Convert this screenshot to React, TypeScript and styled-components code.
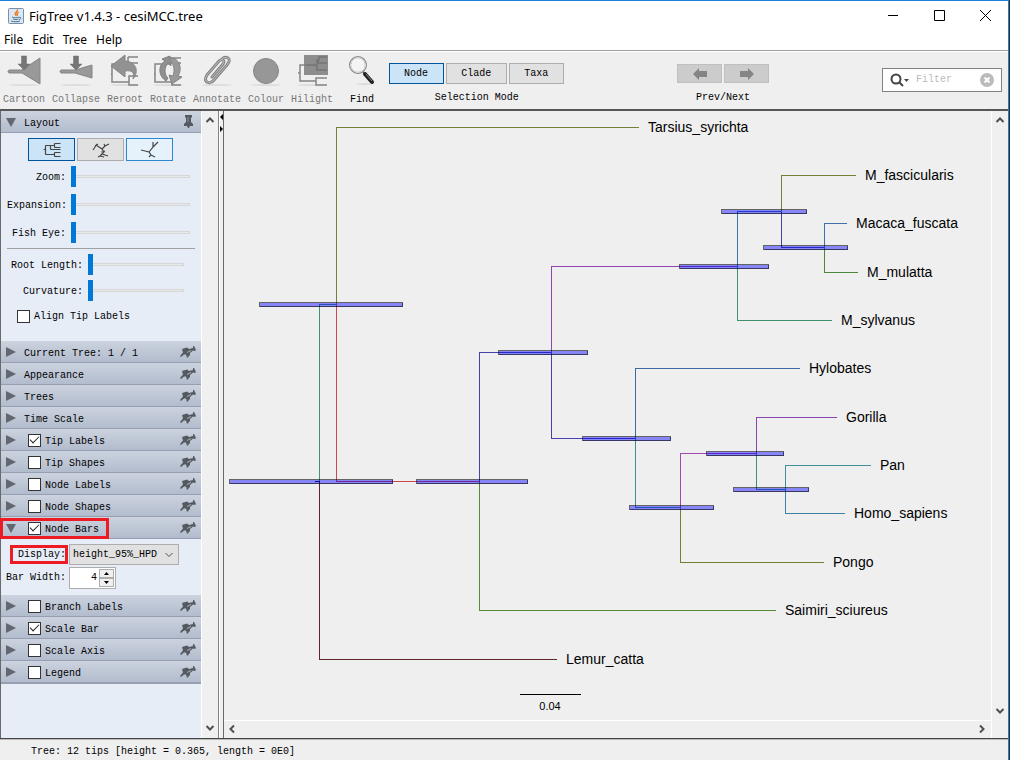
import React, { useState } from "react";
import styled, { createGlobalStyle, css } from "styled-components";

const mono = '"Liberation Mono", "DejaVu Sans Mono", monospace';
const ui = '"Noto Sans", "Open Sans", sans-serif';

const GlobalStyle = createGlobalStyle`
  * { box-sizing: border-box; }
  body { margin: 0; background: #efefef; color: #000; font: 10px/12px ${mono}; }
  button, input, select { font: inherit; color: inherit; margin: 0; padding: 0; }
  svg { display: block; flex: none; }
`;

const Desktop = styled.div`
  display: flex;
  min-height: 100vh;
  padding-right: 1px;
  background: #3a2c2c;
`;

const Window = styled.div`
  flex: 1;
  min-width: 0;
  display: flex;
  flex-direction: column;
  background: #efefef;
  border-top: 1px solid #1a80d8;
  border-right: 1px solid #1a80d8;
`;

const TitleBar = styled.header`
  display: flex;
  align-items: center;
  height: 29px;
  padding-left: 8px;
  gap: 5px;
  background: #fff;
  font-family: ${ui};
`;

const Title = styled.h1`
  flex: 1;
  margin: 0;
  font-size: 13px;
  line-height: 16px;
  font-weight: 400;
`;

const WindowButtons = styled.div`
  display: flex;
`;

const WindowButton = styled.button`
  display: grid;
  place-items: center;
  width: 46px;
  height: 28px;
  border: 0;
  background: none;
`;

const MenuBar = styled.nav`
  display: flex;
  align-items: center;
  gap: 9px;
  height: 21px;
  padding-left: 4px;
  background: #fff;
  border-bottom: 1px solid #a0a0a0;
`;

const MenuItem = styled.button`
  border: 0;
  background: none;
  font-family: ${ui};
  font-size: 12px;
  line-height: 16px;
`;

const ToolBar = styled.div`
  display: flex;
  height: 60px;
  padding: 2px 6px 0 3px;
  border-top: 1px solid #fff;
  border-bottom: 2px solid #555;
`;

const Tools = styled.div`
  display: flex;
  gap: 7px;
`;

const Tool = styled.button<{ $spaced?: boolean }>`
  display: flex;
  flex-direction: column;
  align-items: center;
  gap: 6px;
  height: 54px;
  margin-left: ${(p) => (p.$spaced ? 5 : 0)}px;
  border: 0;
  background: none;
  color: #000;
  &:disabled { color: #777; }
`;

const ToolGroup = styled.div<{ $start?: boolean }>`
  display: flex;
  flex-direction: column;
  align-items: center;
  gap: ${(p) => (p.$start ? 8 : 9)}px;
  padding-top: ${(p) => (p.$start ? 9 : 10)}px;
  margin-left: ${(p) => (p.$start ? "10px" : "auto")};
`;

const ButtonRow = styled.div`
  display: flex;
  gap: 2px;
`;

const ModeButton = styled.button<{ $on: boolean }>`
  height: 21px;
  padding: 0 15px 0 14px;
  border: 1px solid ${(p) => (p.$on ? "#005499" : "#adadad")};
  background: ${(p) => (p.$on ? "#cce4f7" : "#e1e1e1")};
`;

const StepButton = styled.button`
  display: grid;
  place-items: center;
  width: 45px;
  height: 19px;
  border: 1px solid #bfbfbf;
  background: #ccc;
`;

const FilterBox = styled.label`
  display: flex;
  align-items: center;
  width: 120px;
  height: 24px;
  margin: 14px 0 0 auto;
  padding: 0 7px;
  gap: 6px;
  background: #fff;
  border: 1px solid #828282;
`;

const FilterInput = styled.input`
  flex: 1;
  min-width: 0;
  border: 0;
  outline: 0;
  background: none;
  &::placeholder { color: #bbb; opacity: 1; }
`;

const ClearButton = styled.button`
  border: 0;
  background: none;
`;

const Body = styled.div`
  flex: 1;
  display: flex;
`;

const SideBar = styled.aside`
  display: flex;
  border-left: 1px solid #696969;
  border-right: 1px solid #848484;
`;

const Panels = styled.div`
  width: 200px;
  background: #e6edf7;
`;

const ScrollBar = styled.div<{ $corner?: boolean }>`
  display: flex;
  flex-direction: column;
  justify-content: space-between;
  align-items: center;
  width: 17px;
  padding: 5px 0 ${(p) => (p.$corner ? 22 : 5)}px;
  border-left: 1px solid #fff;
  background: #f0f0f0;
`;

const HScrollBar = styled.div`
  display: flex;
  justify-content: space-between;
  align-items: center;
  height: 18px;
  padding: 0 4px 1px;
  border-top: 1px solid #fff;
`;

const ScrollButton = styled.button`
  border: 0;
  background: none;
`;

const Splitter = styled.div`
  display: flex;
  flex-direction: column;
  align-items: flex-end;
  gap: 6px;
  width: 4px;
  padding-top: 3px;
  border-left: 1px solid #fff;
`;

const redFrame = css`
  content: "";
  box-sizing: border-box;
  position: absolute;
  border: 3px solid #ed1c24;
  pointer-events: none;
`;

const Header = styled.div<{ $last?: boolean; $framed?: boolean }>`
  position: relative;
  display: flex;
  align-items: center;
  height: ${(p) => (p.$last ? 23 : 22)}px;
  padding: 4px 5px 0 5px;
  border-bottom: ${(p) => (p.$last ? 2 : 1)}px solid #979fb3;
  background: linear-gradient(#ccd3df, #b2bccd);
  ${(p) => p.$framed && css`&::after { ${redFrame} inset: 1px auto -1px -1px; width: 109px; }`}
`;

const Disclosure = styled.button`
  width: 18px;
  height: 12px;
  margin-top: -4px;
  border: 0;
  background: none;
`;

const HeaderLabel = styled.span`
  flex: 1;
`;

const CheckLabel = styled.label<{ $header?: boolean }>`
  display: flex;
  align-items: center;
  gap: 4px;
  ${(p) => p.$header && css`flex: 1; padding-left: 4px;`}
`;

const CheckBox = styled.input.attrs({ type: "checkbox" })`
  appearance: none;
  width: 13px;
  height: 13px;
  margin-top: -2px;
  border: 1px solid #333;
  background: #fff;
  &:checked::after {
    content: "";
    display: block;
    width: 8px;
    height: 4px;
    margin: 1px;
    border: solid #222;
    border-width: 0 0 1px 1px;
    transform: rotate(-45deg);
  }
`;

const PinButton = styled.button<{ $upright?: boolean }>`
  margin: -4px ${(p) => (p.$upright ? 2 : 0)}px 0 0;
  border: 0;
  background: none;
`;

const LayoutBody = styled.div`
  height: 208px;
  padding: 5px 6px 0;
`;

const LayoutButtons = styled.div`
  display: flex;
  gap: 2px;
  padding: 0 0 3px 21px;
`;

const LayoutButton = styled.button<{ $bg: string; $line: string }>`
  display: grid;
  place-items: center;
  width: 47px;
  height: 23px;
  border: 1px solid ${(p) => p.$line};
  background: ${(p) => p.$bg};
`;

const SliderRow = styled.label<{ $wide?: boolean }>`
  display: flex;
  align-items: center;
  height: ${(p) => (p.$wide ? 26 : 28)}px;
  gap: 5px;
  padding-right: ${(p) => (p.$wide ? 11 : 5)}px;
  > span {
    width: ${(p) => (p.$wide ? 76 : 59)}px;
    text-align: right;
    white-space: nowrap;
  }
`;

const Slider = styled.input.attrs({ type: "range" })`
  appearance: none;
  flex: 1;
  min-width: 0;
  height: 21px;
  margin-top: -3px;
  background: none;
  &::-webkit-slider-runnable-track {
    height: 3px;
    border: 1px solid #d6d6d6;
    background: #e7eaea;
  }
  &::-webkit-slider-thumb {
    appearance: none;
    width: 5px;
    height: 21px;
    margin: -10px 0 0 -1px;
    background: #0078d7;
  }
`;

const Rule = styled.hr`
  height: 1px;
  margin: 0 0 4px;
  border: 0;
  background: #a0a0a0;
`;

const AlignRow = styled.div`
  padding: 6px 0 0 10px;
`;

const BarsBody = styled.div`
  height: 56px;
  padding: 4px 0 0 5px;
`;

const Field = styled.div`
  display: flex;
  align-items: center;
  gap: 3px;
  height: 23px;
`;

const FieldLabel = styled.label<{ $framed?: boolean }>`
  position: relative;
  width: 60px;
  text-align: right;
  ${(p) => p.$framed && css`&::after { ${redFrame} inset: -4px -2px -3px 4px; }`}
`;

const Combo = styled.div`
  display: flex;
  align-items: center;
  width: 110px;
  height: 21px;
  padding-right: 4px;
  border: 1px solid #adadad;
  background: #e1e1e1;
`;

const Select = styled.select`
  appearance: none;
  flex: 1;
  min-width: 0;
  height: 19px;
  padding-left: 3px;
  border: 0;
  background: none;
`;

const Spinner = styled.div`
  display: flex;
  width: 47px;
  height: 22px;
  padding: 1px;
  border: 1px solid #adadad;
  background: #fff;
`;

const SpinInput = styled.input`
  flex: 1;
  min-width: 0;
  padding-right: 2px;
  border: 0;
  text-align: right;
`;

const SpinButtons = styled.div`
  display: grid;
  grid-template-rows: 9px 9px;
  width: 15px;
`;

const SpinButton = styled.button`
  display: grid;
  place-items: center;
  border: 1px solid #adadad;
  background: #f0f0f0;
`;

const Main = styled.main`
  flex: 1;
  min-width: 0;
  display: flex;
  border-left: 1px solid #696969;
`;

const Canvas = styled.div`
  flex: 1;
  min-width: 0;
  display: flex;
  flex-direction: column;
`;

const TreeView = styled.div`
  flex: 1;
  overflow: hidden;
  text { font: 14px "Liberation Sans", Arial, sans-serif; }
`;

const StatusBar = styled.footer`
  height: 22px;
  padding: 7px 0 0 31px;
  border-top: 1px solid #444;
  box-shadow: inset 0 1px #bbb;
`;

/* ---------- icons ---------- */

const Shadow = () => <ellipse cx="17" cy="31" rx="15" ry="1" fill="#ddd" />;

const DownArrow = () => (
  <path d="M14.500 2h5v8h3.500l-6 6-6-6h3.500z" fill="#767676" stroke="#6c6c6c" strokeWidth=".5" />
);

const toolIcons: Record<string, React.ReactNode> = {
  Cartoon: (
    <>
      <Shadow />
      <path d="M2 16h13L33 4v26L15 19H2q-2-1.500 0-3z" fill="#999" stroke="#858585" />
      <DownArrow />
    </>
  ),
  Collapse: (
    <>
      <Shadow />
      <path d="M2 16h14l17-5v13l-17-5H2q-2-1.500 0-3z" fill="#999" stroke="#858585" />
      <DownArrow />
    </>
  ),
  Reroot: (
    <>
      <Shadow />
      <path d="M4 18v-8h14M20 3h10M20 3v8M20 9h10M4 18v10h17v-6h9M21 28v3h9M3 20h1" stroke="#858585" strokeWidth="1.500" fill="none" />
      <path d="M3 12L17 1v6c12 1 14 11 8 18 2-7-1-9-8-8v6z" fill="#929292" stroke="#858585" />
    </>
  ),
  Rotate: (
    <>
      <Shadow />
      <path d="M4 18v-8h14V4h12M4 18v10h17v-5h9M21 28v3h9M20 9h10M3 20h1" stroke="#858585" strokeWidth="1.500" fill="none" />
      <path d="M15 27C7 22 7 11 14 7l-3-2 8-3 1 10-3-3c-4 4-4 12 0 15z" fill="#909090" stroke="#7e7e7e" />
      <path d="M19 4c9-1 13 11 8 18l4 1-10 7-3-9 4 1c2-6 1-12-3-15z" fill="#999" stroke="#858585" />
    </>
  ),
  Annotate: (
    <>
      <Shadow />
      <path
        d="M12 23L23 10q2-3 0-4-2-1-4 1L7 21q-3 5 0 7 4 2 7-2L27 11q4-5 1-7-3-2-6 1"
        fill="none" stroke="#858585" strokeWidth="3" strokeLinecap="round"
      />
      <path
        d="M12 23L23 10q2-3 0-4-2-1-4 1L7 21q-3 5 0 7 4 2 7-2L27 11q4-5 1-7-3-2-6 1"
        fill="none" stroke="#bbb" strokeLinecap="round"
      />
    </>
  ),
  Colour: (
    <>
      <Shadow />
      <circle cx="17" cy="17" r="12.500" fill="#979797" stroke="#858585" />
    </>
  ),
  Hilight: (
    <>
      <Shadow />
      <rect x="9" y="1" width="24" height="20" fill="#8d8d8d" />
      <path d="M10 11h12V6h2V3h8M23 6v3h9M22 11v5h10" stroke="#747474" strokeWidth="1.500" fill="none" />
      <path d="M5 20v-9h5M5 20v7h16v-3h11M21 27v4h11M3 19h2" stroke="#858585" strokeWidth="1.500" fill="none" />
    </>
  ),
  Find: (
    <>
      <ellipse cx="20" cy="30" rx="9" ry="1" fill="#ddd" />
      <path d="M18 18l3 2" stroke="#777" strokeWidth="2" />
      <path d="M20 20l7 8" stroke="#222" strokeWidth="4" strokeLinecap="round" />
      <path d="M21 20l6 7" stroke="#888" />
      <circle cx="13" cy="11" r="8" fill="#f4f4f4" stroke="#888" strokeWidth="2" />
      <circle cx="13" cy="11" r="7.500" fill="none" stroke="#ddd" />
    </>
  ),
};

const ToolIcon = ({ name }: { name: string }) => (
  <svg width="34" height="34" viewBox="0 0 34 34">{toolIcons[name]}</svg>
);

const JavaIcon = () => (
  <svg width="16" height="16" viewBox="0 0 16 16">
    <rect x=".5" y=".5" width="15" height="15" rx="1" fill="#dce7f1" stroke="#7590ad" />
    <path d="M9 1.500c2 2-4 3-1 6M10.500 4c-2 1-2 2-1 4" stroke="#e8751a" fill="none" strokeWidth="1.300" />
    <path d="M4 9c2 1 5 1 7 0M5 11c2 .8 4 .8 5.500 0M3 13c3 1 7 1 9 0M11 9.500c3-.8 2 2 0 2" stroke="#4a7293" fill="none" />
  </svg>
);

const Triangle = ({ open }: { open?: boolean }) => (
  <svg width="12" height="12" viewBox="0 0 12 12">
    <path d={open ? "M0 2h10L5 11z" : "M0 1l10 5-10 5z"} fill="#636870" />
  </svg>
);

const Pin = ({ upright }: { upright?: boolean }) =>
  upright ? (
    <svg width="11" height="15" viewBox="0 0 11 15">
      <path d="M2 1h7v2L8 4v4l2 2v2H7l-1 2H5l-1-2H1v-2l2-2V4L2 3z" fill="#555a60" />
      <path d="M5 3v5" stroke="#8b9199" />
    </svg>
  ) : (
    <svg width="16" height="12" viewBox="0 0 16 12">
      <path d="M2 3l5-1.500L9 3l4-1V0h1l2 4-1 1-2-.5L10 7v2l-3 3-1-3.500H4L1 11 0 10l3-3.500z" fill="#555a60" />
      <path d="M7 6.500l4-2" stroke="#aeb5c2" />
    </svg>
  );

type Dir = "up" | "down" | "left" | "right";
const chevrons: Record<Dir, string> = {
  up: "M1.500 6L5 2.500 8.500 6",
  down: "M1.500 3L5 6.500 8.500 3",
  left: "M6 1.500L2.500 5 6 8.500",
  right: "M3 1.500L6.500 5 3 8.500",
};
const Chevron = ({ dir, thin }: { dir: Dir; thin?: boolean }) => (
  <svg width="10" height="10" viewBox="0 0 10 10">
    <path d={chevrons[dir]} fill="none" stroke="#505050" strokeWidth={thin ? 1 : 2} />
  </svg>
);

const LayoutIcon = ({ kind }: { kind: string }) => {
  const shapes: Record<string, string> = {
    rectangular: "M.5 8.500h2M2.500 4.500v9M2.500 4.500h9M7.500 8.500h10M7.500 4.500v4M11.500 2.500v4M11.500 2.500h6M11.500 6.500h6M2.500 13.500h9M11.500 11.500v4M11.500 11.500h6M11.500 15.500h6",
    polar: "M1 9l4-6M3 5l3-2M4 4l6 4M10 8l3-3 4-2M13 5l-1-2M10 8l2 3-4 4-2 1M9 11l4-1M10 13l6 2M8 15l4 1",
    radial: "M0 9l8 2M8 11l4-5V1M12 6l5-5M8 11l2 3-2 2M10 14l4 2",
  };
  return (
    <svg width="18" height="18" viewBox="0 0 18 18">
      <path d={shapes[kind]} fill="none" stroke="#444" strokeWidth="1.200" />
    </svg>
  );
};

const Arrow = ({ right }: { right?: boolean }) => (
  <svg width="14" height="12" viewBox="0 0 14 12">
    <path d={right ? "M14 6L8 0v3H0v6h8v3z" : "M0 6l6-6v3h8v6H6v3z"} fill="#858585" />
  </svg>
);

/* ---------- tree data, in canvas pixels ---------- */

type Branch = [x: number, fromY: number, toY: number, toX: number, color: string, label?: string];

const branches: Branch[] = [
  [95, 370, 193, 112, "#3f9080"],
  [95, 370, 548, 332, "#5c262c", "Lemur_catta"],
  [112, 193, 16, 414, "#77803a", "Tarsius_syrichta"],
  [112, 193, 370, 255, "#cc484c"],
  [255, 370, 241, 327, "#4444a8"],
  [255, 370, 499, 551, "#548c38", "Saimiri_sciureus"],
  [327, 241, 155, 513, "#9044b0"],
  [327, 241, 327, 411, "#4a40ac"],
  [513, 155, 100, 557, "#4070a8"],
  [513, 155, 209, 607, "#3f906c", "M_sylvanus"],
  [557, 100, 64, 631, "#77803a", "M_fascicularis"],
  [557, 100, 136, 600, "#4444a8"],
  [600, 136, 112, 622, "#4070a8", "Macaca_fuscata"],
  [600, 136, 161, 633, "#488838", "M_mulatta"],
  [411, 327, 257, 575, "#4068a4", "Hylobates"],
  [411, 327, 396, 456, "#3f9094"],
  [456, 396, 342, 532, "#a048b4"],
  [456, 396, 451, 599, "#748030", "Pongo"],
  [532, 342, 306, 612, "#8844b0", "Gorilla"],
  [532, 342, 378, 561, "#3f9070"],
  [561, 378, 354, 646, "#3f9098", "Pan"],
  [561, 378, 402, 620, "#4080a4", "Homo_sapiens"],
];

const nodeBars = [
  [5, 169, 370], [35, 179, 193], [192, 304, 370], [274, 364, 241], [455, 545, 155], [497, 583, 100],
  [539, 624, 136], [358, 447, 327], [405, 490, 396], [482, 560, 342], [509, 585, 378],
];

const PhyloTree = () => (
  <svg width="766" height="609" role="img" aria-label="Phylogenetic tree">
    <g fill="none" shapeRendering="crispEdges" transform="translate(.5 .5)">
      {branches.map(([x, y1, y2, x2, color], i) => (
        <path key={i} d={`M${x} ${y1}V${y2}H${x2}`} stroke={color} />
      ))}
      <path d="M90 370h5" stroke="#111" />
      {nodeBars.map(([x1, x2, y], i) => (
        <rect key={i} x={x1} y={y - 2} width={x2 - x1 - 1} height="4" fill="#00f" fillOpacity=".44" stroke="#000" strokeOpacity=".58" />
      ))}
      <path d="M295 583h61" stroke="#000" />
    </g>
    {branches.map(([, , y, x2, , label]) =>
      label ? <text key={label} x={x2 + 10} y={y + 5}>{label}</text> : null
    )}
    <text x="326" y="599" textAnchor="middle" style={{ fontSize: 11 }}>0.04</text>
  </svg>
);

/* ---------- page ---------- */

type SectionProps = {
  title: string;
  open?: boolean;
  checked?: boolean;
  last?: boolean;
  framed?: boolean;
};

const Section = ({ title, open, checked, last, framed }: SectionProps) => (
  <Header $last={last} $framed={framed}>
    <Disclosure aria-label={`Toggle ${title}`}><Triangle open={open} /></Disclosure>
    {checked === undefined ? (
      <HeaderLabel>{title}</HeaderLabel>
    ) : (
      <CheckLabel $header><CheckBox defaultChecked={checked} />{title}</CheckLabel>
    )}
    <PinButton aria-label={`Pin ${title}`} $upright={title === "Layout"}><Pin upright={title === "Layout"} /></PinButton>
  </Header>
);

const ScrollArrow = ({ dir }: { dir: Dir }) => (
  <ScrollButton aria-label={`Scroll ${dir}`}><Chevron dir={dir} /></ScrollButton>
);

const SliderField = ({ label, wide }: { label: string; wide?: boolean }) => (
  <SliderRow $wide={wide}><span>{label}</span><Slider defaultValue={0} /></SliderRow>
);

export default function App() {
  const [mode, setMode] = useState("Node");
  return (
    <Desktop>
      <GlobalStyle />
      <Window>
        <TitleBar>
          <JavaIcon />
          <Title>FigTree v1.4.3 - cesiMCC.tree</Title>
          <WindowButtons>
            {[["Minimize", "M0 5.500h10"], ["Maximize", "M.5.5h10v10h-10z"], ["Close", "M0 0l11 11M11 0L0 11"]].map(([name, d]) => (
              <WindowButton key={name} aria-label={name}>
                <svg width="11" height="11" viewBox="0 0 11 11"><path d={d} fill="none" stroke="#000" /></svg>
              </WindowButton>
            ))}
          </WindowButtons>
        </TitleBar>
        <MenuBar>
          {["File", "Edit", "Tree", "Help"].map((m) => <MenuItem key={m}>{m}</MenuItem>)}
        </MenuBar>
        <ToolBar>
          <Tools>
            {["Cartoon", "Collapse", "Reroot", "Rotate", "Annotate", "Colour", "Hilight"].map((t) => (
              <Tool key={t} disabled><ToolIcon name={t} />{t}</Tool>
            ))}
            <Tool $spaced><ToolIcon name="Find" />Find</Tool>
          </Tools>
          <ToolGroup $start>
            <ButtonRow>
              {["Node", "Clade", "Taxa"].map((m) => (
                <ModeButton key={m} $on={m === mode} onClick={() => setMode(m)}>{m}</ModeButton>
              ))}
            </ButtonRow>
            <span>Selection Mode</span>
          </ToolGroup>
          <ToolGroup>
            <ButtonRow>
              <StepButton aria-label="Previous" disabled><Arrow /></StepButton>
              <StepButton aria-label="Next" disabled><Arrow right /></StepButton>
            </ButtonRow>
            <span>Prev/Next</span>
          </ToolGroup>
          <FilterBox>
            <svg width="20" height="16" viewBox="0 0 20 16">
              <circle cx="6" cy="7" r="4.500" fill="none" stroke="#444" strokeWidth="2" />
              <path d="M9 10l4 4" stroke="#444" strokeWidth="2" />
              <path d="M14 7h5l-2.500 3z" fill="#444" />
            </svg>
            <FilterInput placeholder="Filter" aria-label="Filter" />
            <ClearButton aria-label="Clear filter">
              <svg width="14" height="14" viewBox="0 0 14 14">
                <circle cx="7" cy="7" r="7" fill="#bbb" />
                <path d="M4.500 4.500l5 5M9.500 4.500l-5 5" stroke="#fff" strokeWidth="2" />
              </svg>
            </ClearButton>
          </FilterBox>
        </ToolBar>
        <Body>
          <SideBar>
            <Panels>
              <Section title="Layout" open />
              <LayoutBody>
                <LayoutButtons>
                  <LayoutButton aria-label="Rectangular" $bg="#cce4f7" $line="#005499"><LayoutIcon kind="rectangular" /></LayoutButton>
                  <LayoutButton aria-label="Polar" $bg="#e1e1e1" $line="#adadad"><LayoutIcon kind="polar" /></LayoutButton>
                  <LayoutButton aria-label="Radial" $bg="#e5f1fb" $line="#2a88d0"><LayoutIcon kind="radial" /></LayoutButton>
                </LayoutButtons>
                <SliderField label="Zoom:" />
                <SliderField label="Expansion:" />
                <SliderField label="Fish Eye:" />
                <Rule />
                <SliderField wide label="Root Length:" />
                <SliderField wide label="Curvature:" />
                <AlignRow><CheckLabel><CheckBox />Align Tip Labels</CheckLabel></AlignRow>
              </LayoutBody>
              <Section title="Current Tree: 1 / 1" />
              <Section title="Appearance" />
              <Section title="Trees" />
              <Section title="Time Scale" />
              <Section title="Tip Labels" checked />
              <Section title="Tip Shapes" checked={false} />
              <Section title="Node Labels" checked={false} />
              <Section title="Node Shapes" checked={false} />
              <Section title="Node Bars" checked open framed />
              <BarsBody>
                <Field>
                  <FieldLabel htmlFor="display" $framed>Display:</FieldLabel>
                  <Combo>
                    <Select id="display"><option>height_95%_HPD</option></Select>
                    <Chevron dir="down" thin />
                  </Combo>
                </Field>
                <Field>
                  <FieldLabel htmlFor="bar-width">Bar Width:</FieldLabel>
                  <Spinner>
                    <SpinInput id="bar-width" defaultValue="4" />
                    <SpinButtons>
                      <SpinButton aria-label="Increase"><svg width="5" height="3"><path d="M0 3h5L2.500 0z" /></svg></SpinButton>
                      <SpinButton aria-label="Decrease"><svg width="5" height="3"><path d="M0 0h5L2.500 3z" /></svg></SpinButton>
                    </SpinButtons>
                  </Spinner>
                </Field>
              </BarsBody>
              <Section title="Branch Labels" checked={false} />
              <Section title="Scale Bar" checked />
              <Section title="Scale Axis" checked={false} />
              <Section title="Legend" checked={false} last />
            </Panels>
            <ScrollBar><ScrollArrow dir="up" /><ScrollArrow dir="down" /></ScrollBar>
          </SideBar>
          <Splitter>
            <svg width="3" height="6"><path d="M3 0v6L0 3z" /></svg>
            <svg width="3" height="6"><path d="M0 0v6l3-3z" /></svg>
          </Splitter>
          <Main>
            <Canvas>
              <TreeView><PhyloTree /></TreeView>
              <HScrollBar><ScrollArrow dir="left" /><ScrollArrow dir="right" /></HScrollBar>
            </Canvas>
            <ScrollBar $corner><ScrollArrow dir="up" /><ScrollArrow dir="down" /></ScrollBar>
          </Main>
        </Body>
        <StatusBar>Tree: 12 tips [height = 0.365, length = 0E0]</StatusBar>
      </Window>
    </Desktop>
  );
}
